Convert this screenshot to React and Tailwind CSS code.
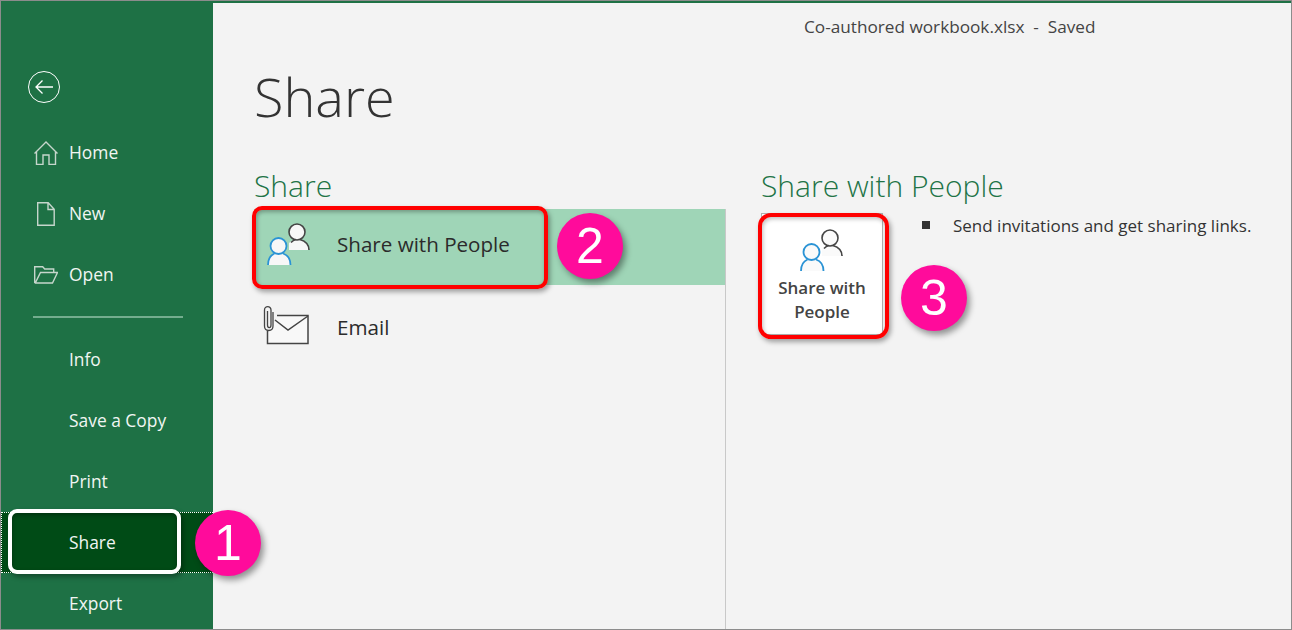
function HomeIcon() {
  return (
    <svg width="24" height="24" viewBox="0 0 24 24" fill="none" stroke="#c6d6cc" strokeWidth="1.400">
      <path d="M.5 12.500 12 1l11.500 11.500M2.500 10.500v13h6.500v-9.500h6v9.500h6.500v-13" />
    </svg>
  );
}

function NewIcon() {
  return (
    <svg width="18" height="24" viewBox="0 0 18 24" fill="none" stroke="#c6d6cc" strokeWidth="1.400">
      <path d="M.700.700h10.500l6 6.500v16.100H.700zM11 .700v6.800h6.200" />
    </svg>
  );
}

function OpenIcon() {
  return (
    <svg width="24" height="18" viewBox="0 0 24 18" fill="none" stroke="#c6d6cc" strokeWidth="1.400">
      <path d="M.700 17V.700h8l2 2.300h9v3.500M.700 17h17.800l5-10.500H6.500L1.500 16.500" />
    </svg>
  );
}

const NAV_TOP = [
  { label: "Home", icon: <HomeIcon /> },
  { label: "New", icon: <NewIcon /> },
  { label: "Open", icon: <OpenIcon /> },
];
const NAV_BOTTOM = ["Info", "Save a Copy", "Print", "Share", "Export"];

function PeopleIcon({ fill }) {
  return (
    <svg width="44" height="44" viewBox="0 0 44 44" fill="none">
      <path d="M22 27v-7c2-2 4-3 5-3.500a8 8 0 1 1 6.500 0c5 1.500 8.500 5 8.500 10.500z" fill={fill} />
      <circle cx="30" cy="9" r="8" stroke="#444" strokeWidth="1.600" />
      <path d="M24 19.500c1.500-1.500 3-2.500 4.500-3M33 16.500c5 1.500 9 5 9 10.500" stroke="#444" strokeWidth="1.600" />
      <path d="M1 42c0-6 3-10 7-11.500a8 8 0 1 1 7 0c5 1.500 8.500 5.500 8.500 11.500z" fill={fill} />
      <circle cx="11.500" cy="23" r="8" stroke="#2a93d5" strokeWidth="1.800" />
      <path d="M1 42c0-6 3-10 6.500-11.500M23.500 42c0-6-3-10-7.500-11.500" stroke="#2a93d5" strokeWidth="1.800" />
    </svg>
  );
}

function EmailIcon() {
  return (
    <svg width="46" height="40" viewBox="0 0 46 40" fill="none" stroke="#444" strokeWidth="1.500">
      <path d="M4.500 26v12.500h40.500V10.500H13.500v4z" fill="#f8f8f8" stroke="none" />
      <path d="M4.500 26v12.500h40.500V10.500H14" />
      <path d="M12 15l13 10L45 11" />
      <path d="M4.500 6v14c0 3.500 3.500 3.500 3.500 0V5C8 .500 1.500 .500 1.500 5v16c0 6 8.500 6 8.500 0V7" strokeWidth="1.300" />
    </svg>
  );
}

function Badge({ n, className }) {
  return (
    <div className={`absolute flex h-[66px] w-[66px] items-center justify-center rounded-full bg-[#ff0b9b] font-['Liberation_Sans',sans-serif] text-[50px] leading-none text-white shadow-[3px_4px_6px_rgba(0,0,0,0.4)] ${className}`}>
      {n}
    </div>
  );
}

function NavItem({ label, icon, active }) {
  return (
    <div className={`flex h-[61px] items-center ${active ? "bg-[#004b16] outline-1 outline-dotted outline-white -outline-offset-1" : ""}`}>
      <div className="flex w-[68px] shrink-0 justify-center pl-[21px]">{icon}</div>
      <span className="text-[17.400px] text-[#f1f6f3]">{label}</span>
    </div>
  );
}

export default function App() {
  return (
    <div className="relative flex h-[630px] w-[1292px] overflow-hidden border border-[#8c8c8c] bg-[#f3f3f3] font-['Open_Sans','Noto_Sans',sans-serif]">
      <aside className="w-[212px] shrink-0 bg-[#1e7145] pt-[70px]">
        <div className="ml-[27px] flex h-[32px] w-[32px] items-center justify-center rounded-full border-[1.500px] border-white">
          <svg width="20" height="16" viewBox="0 0 20 16" fill="none" stroke="#fff" strokeWidth="1.300">
            <path d="M19 8H2M8.500 1.500 2 8l6.500 6.500" />
          </svg>
        </div>
        <nav className="mt-[19px]">
          {NAV_TOP.map((item) => (
            <NavItem key={item.label} label={item.label} icon={item.icon} />
          ))}
          <div className="flex h-[24px] items-center pl-[32px]">
            <div className="h-[2px] w-[150px] bg-[#74ad8e]" />
          </div>
          {NAV_BOTTOM.map((label) => (
            <NavItem key={label} label={label} active={label === "Share"} />
          ))}
        </nav>
      </aside>

      <main className="flex min-w-0 flex-1 flex-col border-t-2 border-[#1e7145]">
        <div className="h-[53px] pl-[591px] pt-[12px] text-[17.200px] leading-[24px] whitespace-pre text-[#444]">
          Co-authored workbook.xlsx  -  Saved
        </div>
        <h1 className="pl-[41px] text-[54px] leading-[80px] font-light text-[#333]">Share</h1>
        <div className="flex flex-1 pt-[28px]">
          <section className="w-[512px] shrink-0 pl-[41px]">
            <h2 className="h-[45px] text-[30px] leading-[44px] font-light text-[#217346]">Share</h2>
            <div className="flex h-[76px] items-center bg-[#9fd5b7] pl-[13px]">
              <div className="mb-[4px]">
                <PeopleIcon fill="#f7f7f7" />
              </div>
              <span className="mb-[5px] ml-[26px] text-[20.600px] text-[#2b2b2b]">Share with People</span>
            </div>
            <div className="mt-[5px] flex h-[76px] items-center pl-[9px]">
              <div className="mb-[6px]">
                <EmailIcon />
              </div>
              <span className="mb-[1px] ml-[28px] text-[20.600px] text-[#2b2b2b]">Email</span>
            </div>
          </section>
          <section className="flex-1 pl-[36px]">
            <h2 className="h-[45px] text-[30px] leading-[44px] font-light text-[#217346]">Share with People</h2>
            <div className="flex">
              <button className="mt-[4px] flex h-[122px] w-[122px] flex-col items-center border border-[#b0b0b0] bg-white pt-[15px] text-[17px] leading-[24px] font-semibold text-[#444]">
                <PeopleIcon fill="#fafafa" />
                <span className="mt-[3px] w-[110px]">Share with People</span>
              </button>
              <ul className="ml-[70px] pt-[5px]">
                <li className="flex items-center text-[17px] leading-[24px] text-[#333]">
                  Send invitations and get sharing links.
                </li>
              </ul>
            </div>
          </section>
        </div>
      </main>

      {/* separators and tutorial callouts laid over the screenshot */}
      <div className="absolute top-[208px] bottom-0 left-[724px] w-[1px] bg-[#c8c8c8]" />
      <div className="absolute top-[220px] left-[921px] h-[8px] w-[8px] bg-[#333]" />
      <div className="absolute top-[508px] left-[7px] h-[65px] w-[173px] rounded-[9px] border-[4px] border-white shadow-[2px_3px_5px_rgba(0,0,0,0.35),inset_0_2px_4px_rgba(0,0,0,0.35)]" />
      <div className="absolute top-[205px] left-[251px] h-[83px] w-[296px] rounded-[10px] border-[4px] border-[#ff0000] shadow-[2px_3px_5px_rgba(0,0,0,0.35),inset_1px_2px_4px_rgba(0,0,0,0.3)]" />
      <div className="absolute top-[212px] left-[757px] h-[126px] w-[131px] rounded-[13px] border-[4px] border-[#ff0000] shadow-[2px_3px_5px_rgba(0,0,0,0.35),inset_1px_2px_4px_rgba(0,0,0,0.25)]" />
      <Badge n="1" className="top-[509px] left-[194px]" />
      <Badge n="2" className="top-[212px] left-[556px]" />
      <Badge n="3" className="top-[264px] left-[900px]" />
    </div>
  );
}
